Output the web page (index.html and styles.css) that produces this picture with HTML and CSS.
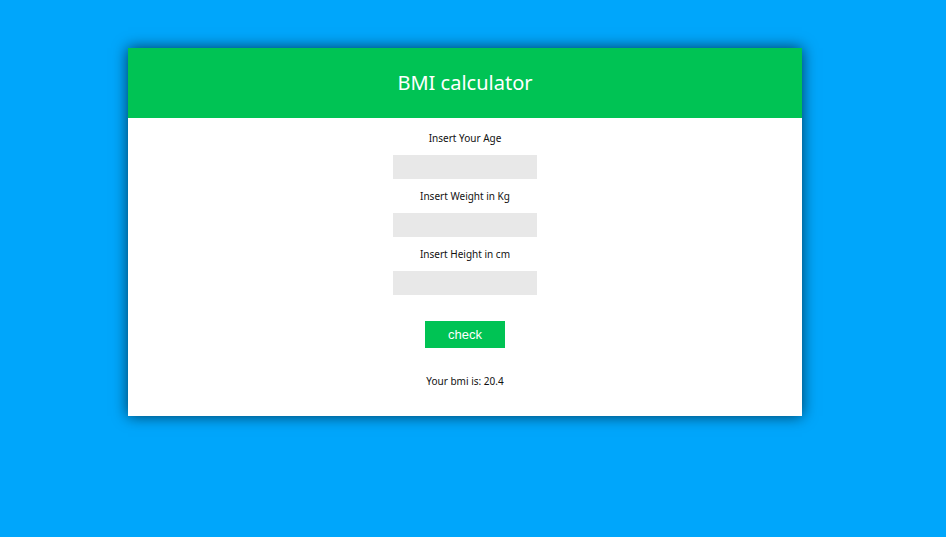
FILE: index.html
```html
<!DOCTYPE html>
<html>
<head>
<meta charset="utf-8">
<link rel="stylesheet" href="styles.css">
</head>
<body>
<div class="card">
  <div class="header"><h1 class="title">BMI calculator</h1></div>
  <div class="form">
    <label class="label">Insert Your Age</label>
    <input class="field" type="text">
    <label class="label">Insert Weight in Kg</label>
    <input class="field" type="text">
    <label class="label">Insert Height in cm</label>
    <input class="field" type="text">
    <button class="btn">check</button>
    <p class="result">Your bmi is: 20.4</p>
  </div>
</div>
</body>
</html>
```
FILE: styles.css
```css
html, body {
  margin: 0;
  padding: 0;
  background: #00a6fb;
  height: 100%;
}
body {
  font-family: "Noto Sans", "Open Sans", sans-serif;
  padding-top: 48px;
  box-sizing: border-box;
}
.card {
  margin-left: 128px;
  width: 674px;
  height: 368px;
  background: #ffffff;
  box-shadow: 0 0 14px rgba(0, 0, 0, 0.65);
}
.header {
  height: 70px;
  background: #00c354;
  display: flex;
  align-items: center;
  justify-content: center;
}
.title {
  margin: 0;
  color: #ffffff;
  font-weight: 400;
  font-size: 20px;
  line-height: 28px;
}
.form {
  display: flex;
  flex-direction: column;
  align-items: center;
  padding-top: 13px;
}
.label {
  font-size: 10px;
  line-height: 14px;
  color: #111;
  margin-bottom: 10px;
}
.field {
  width: 144px;
  height: 24px;
  box-sizing: border-box;
  border: none;
  background: #e8e8e8;
  margin: 0 0 10px 0;
  padding: 0;
}
.field:last-of-type {
  margin-bottom: 26px;
}
.btn {
  width: 80px;
  height: 27px;
  border: none;
  background: #00c354;
  color: #ffffff;
  font-family: "Liberation Sans", Arial, sans-serif;
  font-size: 13px;
  padding: 0;
}
.result {
  margin: 26px 0 0 0;
  font-size: 10px;
  line-height: 14px;
  color: #111;
}
```
